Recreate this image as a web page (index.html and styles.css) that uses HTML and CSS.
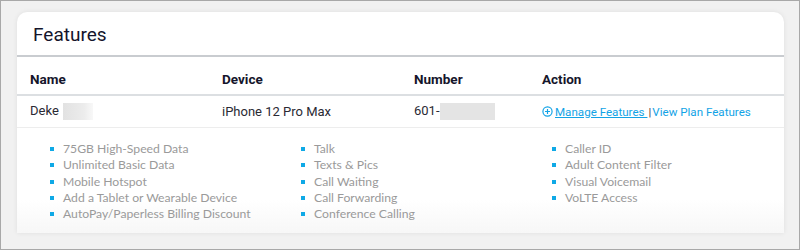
FILE: index.html
```html
<!DOCTYPE html>
<html>
<head>
    <title>Features</title>
    <link rel="stylesheet" href="styles.css">
</head>
<body>
    <div class="frame">
        <div class="card">
            <h2 class="card-title">Features</h2>

            <div class="line-row head">
                <div>Name</div>
                <div>Device</div>
                <div>Number</div>
                <div>Action</div>
            </div>

            <div class="line-row">
                <div>Deke <span class="blur blur-name"></span></div>
                <div>iPhone 12 Pro Max</div>
                <div>601-<span class="blur blur-num"></span></div>
                <div class="actions">
                    <a href="#" class="manage">
                        <svg width="11" height="11" viewBox="0 0 12 12">
                            <circle cx="6" cy="6" r="5" fill="none" stroke="currentColor" stroke-width="1.3"/>
                            <path d="M6 3.3v5.4M3.3 6h5.4" stroke="currentColor" stroke-width="1.3"/>
                        </svg><u>Manage Features </u></a><span class="sep">|</span><a href="#">View Plan Features</a>
                </div>
            </div>

            <div class="feature-lists">
                <ul>
                    <li>75GB High-Speed Data</li>
                    <li>Unlimited Basic Data</li>
                    <li>Mobile Hotspot</li>
                    <li>Add a Tablet or Wearable Device</li>
                    <li>AutoPay/Paperless Billing Discount</li>
                </ul>
                <ul>
                    <li>Talk</li>
                    <li>Texts &amp; Pics</li>
                    <li>Call Waiting</li>
                    <li>Call Forwarding</li>
                    <li>Conference Calling</li>
                </ul>
                <ul>
                    <li>Caller ID</li>
                    <li>Adult Content Filter</li>
                    <li>Visual Voicemail</li>
                    <li>VoLTE Access</li>
                </ul>
            </div>
        </div>
    </div>
</body>
</html>
```

FILE: styles.css
```css
body {
    margin: 0;
    font-family: Roboto, "Liberation Sans", sans-serif;
}
.frame {
    width: 800px;
    height: 250px;
    box-sizing: border-box;
    border: 1px solid #a8a8a8;
    background-color: #f1f1f1;
    padding: 11px 15px 0 16px;
    overflow: hidden;
}
.card {
    background-color: white;
    border-radius: 10px 10px 0 0;
    box-shadow: 0 0 5px rgba(0,0,0,0.08);
    height: 221px;
    background-image: linear-gradient(to bottom, white 85%, #f7f7f7 100%);
}
.card-title {
    margin: 0;
    padding: 0 16px;
    height: 43px;
    line-height: 45px;
    font-size: 19px;
    font-weight: 400;
    color: #14142b;
    border-bottom: 2px solid #c9ccd0;
}
.line-row {
    display: grid;
    grid-template-columns: 192px 192px 128px 1fr;
    padding-left: 13px;
    align-items: center;
    font-size: 13px;
    color: #2a2a33;
}
.line-row.head {
    height: 31px;
    padding-top: 6px;
    font-weight: 700;
    font-size: 13.5px;
    color: #15152b;
    border-bottom: 2px solid #dcdfe2;
}
.line-row:not(.head) {
    height: 31px;
    border-bottom: 1px solid #ededed;
}
.blur {
    display: inline-block;
    height: 17px;
    vertical-align: middle;
    background: linear-gradient(to right, #e2e2e2, #ececec 70%, #f8f8f8);
}
.blur-name {
    width: 30px;
    margin-left: 1px;
}
.blur-num {
    width: 55px;
    background: #e4e4e4;
}
.actions {
    font-size: 11.6px;
    white-space: nowrap;
}
.actions a {
    color: #12a3e6;
    text-decoration: none;
}
.manage svg {
    vertical-align: -1px;
    margin-right: 2px;
}
.sep {
    color: #444;
    margin: 0 1px;
}
.feature-lists {
    display: grid;
    grid-template-columns: 251px 251px 1fr;
    padding: 13px 0 0 33px;
}
.feature-lists ul {
    list-style: none;
    margin: 0;
    padding: 0;
}
.feature-lists li {
    font-family: Lato, "Open Sans", sans-serif;
    font-size: 12.2px;
    line-height: 16.3px;
    color: #9a9a9a;
    display: flex;
    align-items: center;
}
.feature-lists li::before {
    content: "";
    width: 4px;
    height: 4px;
    background-color: #0fa9e6;
    margin-right: 9px;
    flex: none;
}
```
